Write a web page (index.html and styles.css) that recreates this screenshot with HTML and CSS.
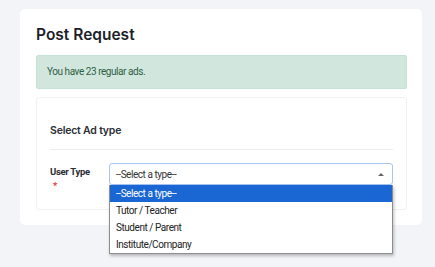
FILE: index.html
```html
<!DOCTYPE html>
<html lang="en">

<head>
  <meta charset="UTF-8">
  <meta name="viewport" content="width=device-width, initial-scale=1.0">
  <title>Post Request</title>
  <link rel="stylesheet" href="styles.css">
</head>

<body>
  <div class="page">
    <div class="card">
      <h1 class="title">Post Request</h1>
      <div class="alert">You have 23 regular ads.</div>
      <div class="panel">
        <h2 class="panel-title">Select Ad type</h2>
        <div class="form-row">
          <label class="label">User Type <span class="required">*</span></label>
          <div class="select-wrap">
            <div class="select">
              <span>--Select a type--</span>
              <span class="arrow"></span>
            </div>
            <ul class="options">
              <li class="active">--Select a type--</li>
              <li>Tutor / Teacher</li>
              <li>Student / Parent</li>
              <li>Institute/Company</li>
            </ul>
          </div>
        </div>
      </div>
    </div>
  </div>
</body>

</html>
```

FILE: styles.css
```css
* {
  box-sizing: border-box;
}

body {
  margin: 0;
  min-height: 100vh;
  background-color: #f3f4f8;
  font-family: 'Roboto', 'Liberation Sans', sans-serif;
  color: #212529;
}

.page {
  padding: 9px 13px 0 20px;
}

.card {
  background-color: #fff;
  border-radius: 5px;
  padding: 14px 15px 15px 16px;
  height: 216px;
}

.title {
  margin: 0 0 8px;
  font-family: 'Inter', 'Open Sans', sans-serif;
  font-weight: 600;
  font-size: 15.5px;
  line-height: 24px;
  color: #1c1f2a;
}

.alert {
  height: 34px;
  background-color: #d1e7dd;
  border: 1px solid #c6e1d5;
  border-radius: 2px;
  color: #2f5e47;
  font-size: 10px;
  letter-spacing: -0.45px;
  padding: 0 10px;
  line-height: 32px;
}

.panel {
  margin-top: 8px;
  border: 1px solid #f1f1f3;
  border-radius: 3px;
  padding: 0 13px 0 13px;
  height: 113px;
}

.panel-title {
  margin: 0;
  padding: 25px 0 10px;
  font-family: 'Inter', 'Open Sans', sans-serif;
  font-weight: 600;
  font-size: 10.5px;
  letter-spacing: -0.2px;
  line-height: 16px;
  color: #2a2d35;
  border-bottom: 1px solid #ececef;
}

.form-row {
  display: flex;
  margin-top: 13px;
}

.label {
  width: 59px;
  font-weight: 700;
  font-size: 9.5px;
  letter-spacing: -0.3px;
  line-height: 14px;
  color: #2a2d35;
  padding-top: 2px;
}

.required {
  display: block;
  color: #e53935;
  padding-left: 3px;
}

.select-wrap {
  flex: 1;
  position: relative;
}

.select {
  display: flex;
  justify-content: space-between;
  align-items: center;
  height: 22px;
  border: 1px solid #a9c4f2;
  border-radius: 3px;
  padding: 0 8px 0 6px;
  font-size: 10px;
  letter-spacing: -0.45px;
  color: #333;
}

.arrow {
  width: 0;
  height: 0;
  border-left: 3px solid transparent;
  border-right: 3px solid transparent;
  border-bottom: 3px solid #666;
}

.options {
  position: absolute;
  top: 22px;
  left: 0;
  right: 0;
  margin: 0;
  padding: 0;
  list-style: none;
  background-color: #fff;
  border: 1px solid #8d8d8d;
  border-top: none;
  box-shadow: 1px 2px 3px rgba(0, 0, 0, 0.25);
  font-size: 10px;
  letter-spacing: -0.45px;
  color: #222;
}

.options li {
  height: 17px;
  line-height: 17px;
  padding-left: 6px;
}

.options li.active {
  background-color: #1a66d2;
  color: #fff;
}
```
